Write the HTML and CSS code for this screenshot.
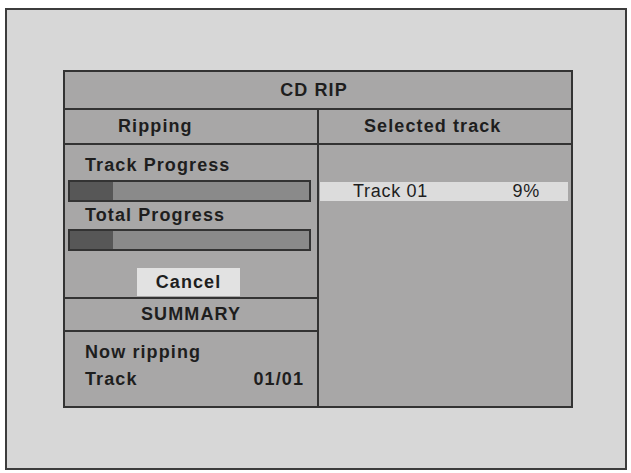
FILE: index.html
```html
<!DOCTYPE html>
<html lang="en">
  <head>
    <meta charset="UTF-8" />
    <meta name="viewport" content="width=device-width, initial-scale=1.0" />
    <title>CD RIP</title>
    <link rel="stylesheet" href="styles.css">
  </head>
  <body>
    <div class="screen">
      <div class="panel">
        <div class="panel-title">CD RIP</div>
        <div class="columns">
          <div class="col col-left">
            <div class="col-head head-ripping">Ripping</div>
            <div class="progress">
              <div class="label">Track Progress</div>
              <div class="bar"><div class="bar-fill" style="width: 18%"></div></div>
              <div class="label label-total">Total Progress</div>
              <div class="bar bar-total"><div class="bar-fill" style="width: 18%"></div></div>
              <button class="cancel-btn">Cancel</button>
            </div>
            <div class="summary-head">SUMMARY</div>
            <div class="summary">
              <div class="summary-row">Now ripping</div>
              <div class="summary-row row-track">
                <span>Track</span>
                <span>01/01</span>
              </div>
            </div>
          </div>
          <div class="col col-right">
            <div class="col-head head-selected">Selected track</div>
            <div class="track-list">
              <div class="track-item">
                <span>Track 01</span>
                <span>9%</span>
              </div>
            </div>
          </div>
        </div>
      </div>
    </div>
  </body>
</html>
```

FILE: styles.css
```css
body {
  margin: 0;
  background-color: #ffffff;
  font-family: "Liberation Sans", Arial, sans-serif;
  color: #1e1e1e;
}
.screen {
  margin: 8px 4px 3px 5px;
  height: 462px;
  box-sizing: border-box;
  border: 2px solid #3c3c3c;
  background-color: #d7d7d7;
  padding: 60px 52px 60px 56px;
}
.panel {
  width: 510px;
  height: 338px;
  box-sizing: border-box;
  border: 2px solid #333333;
  background-color: #a8a7a7;
  display: flex;
  flex-direction: column;
}
.panel-title {
  height: 36px;
  line-height: 36px;
  border-bottom: 2px solid #333333;
  text-align: center;
  font-size: 18px;
  font-weight: bold;
  letter-spacing: 1.1px;
  padding-right: 8px;
}
.columns {
  display: flex;
  flex: 1;
}
.col {
  width: 252px;
  display: flex;
  flex-direction: column;
}
.col-left {
  border-right: 2px solid #333333;
}
.col-head {
  height: 33px;
  line-height: 33px;
  border-bottom: 2px solid #333333;
  font-size: 18px;
  font-weight: bold;
  letter-spacing: 1.1px;
}
.head-ripping {
  padding-left: 53px;
}
.head-selected {
  padding-left: 45px;
}
.progress {
  height: 152px;
  box-sizing: border-box;
  padding: 10px 6px 0 3px;
  display: flex;
  flex-direction: column;
}
.label {
  height: 20px;
  line-height: 20px;
  padding-left: 17px;
  font-size: 18px;
  font-weight: bold;
  letter-spacing: 1.1px;
}
.label-total {
  margin-top: 3px;
}
.bar {
  height: 22px;
  margin-top: 5px;
  box-sizing: border-box;
  border: 2px solid #333333;
  background-color: #8a8a8a;
}
.bar-total {
  margin-top: 4px;
}
.bar-fill {
  height: 100%;
  background-color: #575757;
}
.cancel-btn {
  align-self: center;
  width: 103px;
  height: 28px;
  margin-top: 17px;
  margin-right: 2px;
  padding: 0;
  border: none;
  background-color: #e2e2e2;
  font-family: "Liberation Sans", Arial, sans-serif;
  font-size: 18px;
  font-weight: bold;
  letter-spacing: 1.1px;
  color: #1e1e1e;
}
.summary-head {
  height: 31px;
  line-height: 31px;
  border-top: 2px solid #333333;
  border-bottom: 2px solid #333333;
  text-align: center;
  font-size: 18px;
  font-weight: bold;
  letter-spacing: 1.1px;
}
.summary {
  flex: 1;
  padding: 10px 13px 0 20px;
}
.summary-row {
  height: 20px;
  line-height: 20px;
  font-size: 18px;
  font-weight: bold;
  letter-spacing: 1.1px;
}
.row-track {
  margin-top: 7px;
  display: flex;
  justify-content: space-between;
}
.track-list {
  flex: 1;
  padding: 37px 3px 0 1px;
}
.track-item {
  height: 19px;
  line-height: 19px;
  background-color: #dcdcdc;
  display: flex;
  justify-content: space-between;
  padding: 0 28px 0 33px;
  font-size: 18px;
  letter-spacing: 0.7px;
}
```
